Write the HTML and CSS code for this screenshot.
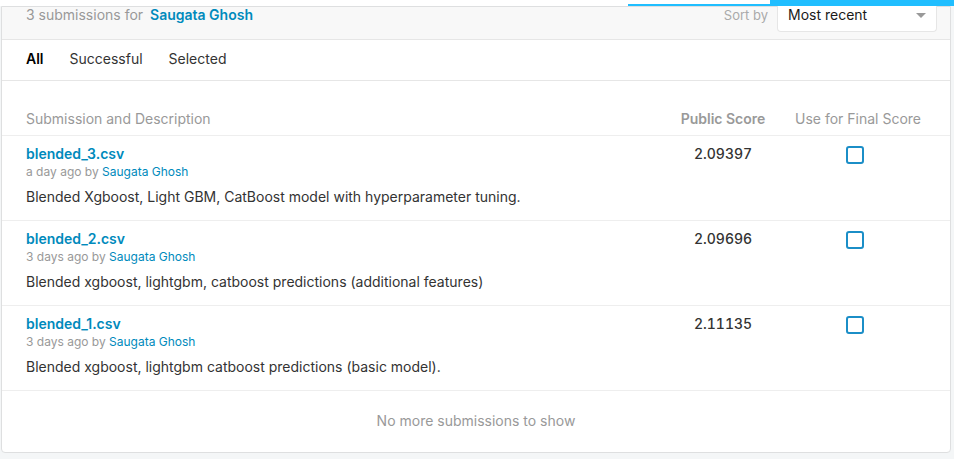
FILE: index.html
```html
<!DOCTYPE html>
<html>
<head>
<meta charset="utf-8">
<link rel="stylesheet" href="styles.css">
</head>
<body>
<div class="topstrip">
  <div class="bar-thin"></div>
  <div class="bar-thick"></div>
</div>
<div class="card">
  <div class="card-head">
    <div class="title">3 submissions for <a class="user">Saugata Ghosh</a></div>
    <div class="sort">
      <span class="sort-label">Sort by</span>
      <div class="select">
        <span>Most recent</span>
        <span class="caret"></span>
      </div>
    </div>
  </div>
  <div class="tabs">
    <span class="tab active">All</span>
    <span class="tab">Successful</span>
    <span class="tab">Selected</span>
  </div>
  <div class="grid colhead">
    <div>Submission and Description</div>
    <div class="c-score strong">Public Score</div>
    <div class="c-final">Use for Final Score</div>
  </div>
  <div class="grid row">
    <div>
      <div class="file">blended_3.csv</div>
      <div class="meta">a day ago by <a class="by">Saugata Ghosh</a></div>
      <div class="desc">Blended Xgboost, Light GBM, CatBoost model with hyperparameter tuning.</div>
    </div>
    <div class="c-score score">2.09397</div>
    <div class="c-final"><span class="check"></span></div>
  </div>
  <div class="grid row">
    <div>
      <div class="file">blended_2.csv</div>
      <div class="meta">3 days ago by <a class="by">Saugata Ghosh</a></div>
      <div class="desc">Blended xgboost, lightgbm, catboost predictions (additional features)</div>
    </div>
    <div class="c-score score">2.09696</div>
    <div class="c-final"><span class="check"></span></div>
  </div>
  <div class="grid row">
    <div>
      <div class="file">blended_1.csv</div>
      <div class="meta">3 days ago by <a class="by">Saugata Ghosh</a></div>
      <div class="desc">Blended xgboost, lightgbm catboost predictions (basic model).</div>
    </div>
    <div class="c-score score">2.11135</div>
    <div class="c-final"><span class="check"></span></div>
  </div>
  <div class="footer">No more submissions to show</div>
</div>
</body>
</html>
```

FILE: styles.css
```css
html, body {
  margin: 0;
  padding: 0;
}
body {
  background: #f4f6f7;
  font-family: Inter, Roboto, "Liberation Sans", Arial, sans-serif;
  font-size: 14px;
  color: #333;
  width: 954px;
  height: 459px;
  overflow: hidden;
}
.topstrip {
  height: 6px;
  background: #fff;
  display: flex;
  align-items: flex-end;
  padding-left: 628px;
}
.bar-thin {
  width: 142px;
  height: 2px;
  background: #20beff;
}
.bar-thick {
  flex: 1;
  height: 6px;
  background: #20beff;
}
.card {
  margin-left: 1px;
  width: 948px;
  background: #fff;
  border: 1px solid #dedfe0;
  border-radius: 0 0 4px 4px;
}
.card-head {
  height: 32px;
  background: #f8f8f8;
  border-bottom: 1px solid #e6e6e6;
  display: flex;
  justify-content: space-between;
  align-items: flex-start;
  padding: 0 13px 0 24px;
}
.title {
  color: #999;
  line-height: 16px;
}
.user {
  color: #008abc;
  font-weight: 600;
  margin-left: 3px;
}
.sort {
  display: flex;
  align-items: flex-start;
}
.sort-label {
  color: #aaa;
  font-size: 13px;
  line-height: 16px;
  margin-right: 9px;
}
.select {
  width: 160px;
  height: 26px;
  box-sizing: border-box;
  margin-top: -1px;
  background: #fff;
  border: 1px solid #e6e6e6;
  border-top: none;
  border-radius: 0 0 4px 4px;
  display: flex;
  justify-content: space-between;
  padding: 0 10px 0 10px;
  color: #1a1a1a;
  line-height: 18px;
}
.caret {
  width: 0;
  height: 0;
  margin-top: 7px;
  border-left: 5px solid transparent;
  border-right: 5px solid transparent;
  border-top: 5px solid #999;
}
.tabs {
  height: 41px;
  box-sizing: border-box;
  border-bottom: 1px solid #e6e6e6;
  display: flex;
  align-items: center;
  gap: 26px;
  padding: 0 0 3px 24px;
}
.tab {
  color: #333;
}
.tab.active {
  color: #000;
  font-weight: 600;
}
.grid {
  display: grid;
  grid-template-columns: 1fr 100px 150px;
  column-gap: 10px;
  padding: 0 17px 0 24px;
  border-bottom: 1px solid #eee;
}
.colhead {
  height: 55px;
  align-items: end;
  padding-bottom: 8px;
  box-sizing: border-box;
  color: #999;
}
.c-score {
  text-align: center;
}
.c-final {
  text-align: center;
}
.strong {
  font-weight: 600;
}
.row {
  height: 85px;
  box-sizing: border-box;
  padding-top: 9px;
}
.file {
  color: #008abc;
  font-weight: 600;
  line-height: 18px;
}
.meta {
  color: #999;
  font-size: 12px;
  line-height: 18px;
}
.by {
  color: #008abc;
}
.desc {
  line-height: 18px;
  margin-top: 7px;
}
.score {
  line-height: 18px;
  font-weight: 500;
  font-variant-numeric: tabular-nums;
}
.check {
  display: inline-block;
  width: 18px;
  height: 18px;
  box-sizing: border-box;
  border: 2px solid #1b8ec7;
  border-radius: 3px;
  margin: 1px 6px 0 0;
}
.footer {
  height: 61px;
  box-sizing: border-box;
  padding-bottom: 2px;
  display: flex;
  align-items: center;
  justify-content: center;
  color: #999;
}
```
